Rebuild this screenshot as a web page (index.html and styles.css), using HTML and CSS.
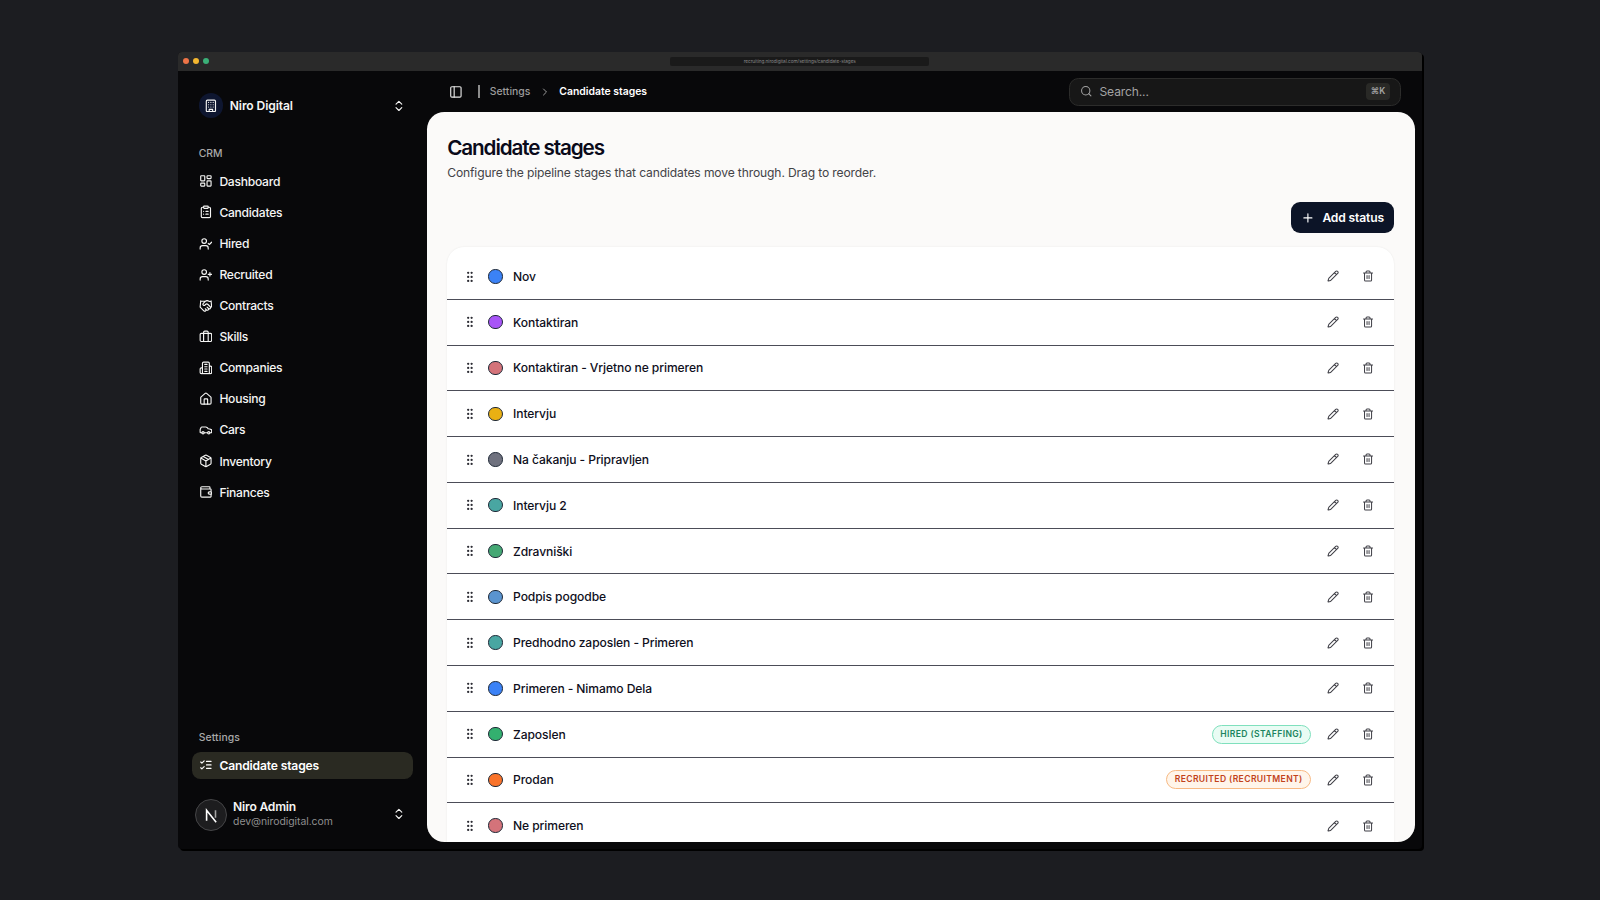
FILE: index.html
```html
<!DOCTYPE html>
<html lang="en">
    <head>
        <meta charset="utf-8">
        <title>Candidate stages</title>
        <link rel="stylesheet" href="styles.css">
    </head>
    <body>
        <svg class="sprite">
            <symbol id="i-building" viewBox="0 0 24 24"><rect x="4" y="2" width="16" height="20" rx="2"/><path d="M9 22v-4h6v4M8 6h.01M16 6h.01M12 6h.01M12 10h.01M12 14h.01M16 10h.01M16 14h.01M8 10h.01M8 14h.01"/></symbol>
            <symbol id="i-updown" viewBox="0 0 24 24"><path d="m7 15 5 5 5-5M7 9l5-5 5 5"/></symbol>
            <symbol id="i-dashboard" viewBox="0 0 24 24"><rect width="7" height="9" x="3" y="3" rx="1"/><rect width="7" height="5" x="14" y="3" rx="1"/><rect width="7" height="9" x="14" y="12" rx="1"/><rect width="7" height="5" x="3" y="16" rx="1"/></symbol>
            <symbol id="i-clipboard" viewBox="0 0 24 24"><rect width="8" height="4" x="8" y="2" rx="1"/><path d="M16 4h2a2 2 0 0 1 2 2v14a2 2 0 0 1-2 2H6a2 2 0 0 1-2-2V6a2 2 0 0 1 2-2h2M12 11h4M12 16h4M8 11h.01M8 16h.01"/></symbol>
            <symbol id="i-usercheck" viewBox="0 0 24 24"><path d="m16 11 2 2 4-4M16 21v-2a4 4 0 0 0-4-4H6a4 4 0 0 0-4 4v2"/><circle cx="9" cy="7" r="4"/></symbol>
            <symbol id="i-userplus" viewBox="0 0 24 24"><path d="M16 21v-2a4 4 0 0 0-4-4H6a4 4 0 0 0-4 4v2M19 8v6M22 11h-6"/><circle cx="9" cy="7" r="4"/></symbol>
            <symbol id="i-handshake" viewBox="0 0 24 24"><path d="m11 17 2 2a1 1 0 1 0 3-3M14 14l2.500 2.500a1 1 0 1 0 3-3l-3.880-3.880a3 3 0 0 0-4.240 0l-.880.880a1 1 0 1 1-3-3l2.810-2.810a5.790 5.790 0 0 1 7.060-.870l.470.280a2 2 0 0 0 1.420.250L21 4M21 3l1 11h-2M3 3 2 14l6.500 6.500a1 1 0 1 0 3-3M3 4h8"/></symbol>
            <symbol id="i-case" viewBox="0 0 24 24"><path d="M16 20V4a2 2 0 0 0-2-2h-4a2 2 0 0 0-2 2v16"/><rect width="20" height="14" x="2" y="6" rx="2"/></symbol>
            <symbol id="i-companies" viewBox="0 0 24 24"><path d="M6 22V4a2 2 0 0 1 2-2h8a2 2 0 0 1 2 2v18ZM6 12H4a2 2 0 0 0-2 2v6a2 2 0 0 0 2 2h2M18 9h2a2 2 0 0 1 2 2v9a2 2 0 0 1-2 2h-2M10 6h4M10 10h4M10 14h4M10 18h4"/></symbol>
            <symbol id="i-house" viewBox="0 0 24 24"><path d="M15 21v-8a1 1 0 0 0-1-1h-4a1 1 0 0 0-1 1v8"/><path d="M3 10a2 2 0 0 1 .709-1.528l7-5.999a2 2 0 0 1 2.582 0l7 5.999A2 2 0 0 1 21 10v9a2 2 0 0 1-2 2H5a2 2 0 0 1-2-2z"/></symbol>
            <symbol id="i-car" viewBox="0 0 24 24"><path d="M19 17h2c.6 0 1-.4 1-1v-3c0-.9-.7-1.700-1.500-1.900C18.700 10.600 16 10 16 10s-1.300-1.400-2.200-2.300c-.5-.4-1.100-.7-1.800-.7H5c-.6 0-1.100.4-1.400.9l-1.400 2.900A3.700 3.700 0 0 0 2 12v4c0 .6.4 1 1 1h2M9 17h6"/><circle cx="7" cy="17" r="2"/><circle cx="17" cy="17" r="2"/></symbol>
            <symbol id="i-package" viewBox="0 0 24 24"><path d="M11 21.730a2 2 0 0 0 2 0l7-4A2 2 0 0 0 21 16V8a2 2 0 0 0-1-1.730l-7-4a2 2 0 0 0-2 0l-7 4A2 2 0 0 0 3 8v8a2 2 0 0 0 1 1.730zM12 22V12M3.290 7 12 12l8.710-5M7.500 4.270l9 5.150"/></symbol>
            <symbol id="i-wallet" viewBox="0 0 24 24"><path d="M19 7V4a1 1 0 0 0-1-1H5a2 2 0 0 0 0 4h15a1 1 0 0 1 1 1v4h-3a2 2 0 0 0 0 4h3a1 1 0 0 0 1-1v-2a1 1 0 0 0-1-1M3 5v14a2 2 0 0 0 2 2h15a1 1 0 0 0 1-1v-4"/></symbol>
            <symbol id="i-checks" viewBox="0 0 24 24"><path d="m3 17 2 2 4-4M3 7l2 2 4-4M13 6h8M13 12h8M13 18h8"/></symbol>
            <symbol id="i-panel" viewBox="0 0 24 24"><rect width="18" height="18" x="3" y="3" rx="2"/><path d="M9 3v18"/></symbol>
            <symbol id="i-chevron" viewBox="0 0 24 24"><path d="m9 18 6-6-6-6"/></symbol>
            <symbol id="i-search" viewBox="0 0 24 24"><circle cx="11" cy="11" r="8"/><path d="m21 21-4.300-4.300"/></symbol>
            <symbol id="i-plus" viewBox="0 0 24 24"><path d="M5 12h14M12 5v14"/></symbol>
            <symbol id="i-grip" viewBox="0 0 24 24"><circle cx="9" cy="12" r="1"/><circle cx="9" cy="5" r="1"/><circle cx="9" cy="19" r="1"/><circle cx="15" cy="12" r="1"/><circle cx="15" cy="5" r="1"/><circle cx="15" cy="19" r="1"/></symbol>
            <symbol id="i-pencil" viewBox="0 0 24 24"><path d="M21.174 6.812a1 1 0 0 0-3.986-3.987L3.842 16.174a2 2 0 0 0-.5.830l-1.321 4.352a.5.5 0 0 0 .623.622l4.353-1.320a2 2 0 0 0 .830-.497zM15 5l4 4"/></symbol>
            <symbol id="i-trash" viewBox="0 0 24 24"><path d="M3 6h18M19 6v14a2 2 0 0 1-2 2H7a2 2 0 0 1-2-2V6M8 6V4a2 2 0 0 1 2-2h4a2 2 0 0 1 2 2v2M10 11v6M14 11v6"/></symbol>
        </svg>

        <div class="window">
            <div class="titlebar">
                <div class="lights"><i class="red"></i><i class="yellow"></i><i class="green"></i></div>
                <div class="address">recruiting.nirodigital.com/settings/candidate-stages</div>
            </div>
            <div class="app">
                <aside class="sidebar">
                    <div class="org">
                        <span class="org-logo"><svg class="icon"><use href="#i-building"/></svg></span>
                        <span class="org-name">Niro Digital</span>
                        <svg class="icon"><use href="#i-updown"/></svg>
                    </div>
                    <p class="group">CRM</p>
                    <nav id="crm">
                        <a class="item"><svg class="icon"><use href="#i-dashboard"/></svg>Dashboard</a>
                        <a class="item"><svg class="icon"><use href="#i-clipboard"/></svg>Candidates</a>
                        <a class="item"><svg class="icon"><use href="#i-usercheck"/></svg>Hired</a>
                        <a class="item"><svg class="icon"><use href="#i-userplus"/></svg>Recruited</a>
                        <a class="item"><svg class="icon"><use href="#i-handshake"/></svg>Contracts</a>
                        <a class="item"><svg class="icon"><use href="#i-case"/></svg>Skills</a>
                        <a class="item"><svg class="icon"><use href="#i-companies"/></svg>Companies</a>
                        <a class="item"><svg class="icon"><use href="#i-house"/></svg>Housing</a>
                        <a class="item"><svg class="icon"><use href="#i-car"/></svg>Cars</a>
                        <a class="item"><svg class="icon"><use href="#i-package"/></svg>Inventory</a>
                        <a class="item"><svg class="icon"><use href="#i-wallet"/></svg>Finances</a>
                    </nav>
                    <p class="group settings">Settings</p>
                    <nav>
                        <a class="item active"><svg class="icon"><use href="#i-checks"/></svg>Candidate stages</a>
                    </nav>
                    <div class="user">
                        <span class="avatar">
                            <svg viewBox="0 0 32 32"><path d="M11.300 22V11l10.200 12.800" class="n-left"/><path d="M20.800 11v8" class="n-right"/></svg>
                        </span>
                        <div class="who">
                            <div class="user-name">Niro Admin</div>
                            <div class="user-mail">dev@nirodigital.com</div>
                        </div>
                        <svg class="icon"><use href="#i-updown"/></svg>
                    </div>
                </aside>

                <main class="main">
                    <header class="topbar">
                        <svg class="icon"><use href="#i-panel"/></svg>
                        <span class="sep"></span>
                        <span class="crumb">Settings</span>
                        <svg class="icon chev"><use href="#i-chevron"/></svg>
                        <span class="crumb current">Candidate stages</span>
                        <div class="search">
                            <svg class="icon"><use href="#i-search"/></svg>
                            <span>Search...</span>
                            <kbd>⌘K</kbd>
                        </div>
                    </header>
                    <section class="panel">
                        <h1>Candidate stages</h1>
                        <p class="desc">Configure the pipeline stages that candidates move through. Drag to reorder.</p>
                        <button type="button" class="add"><svg class="icon"><use href="#i-plus"/></svg>Add status</button>
                        <div class="card" id="stages"></div>
                    </section>
                </main>
            </div>
        </div>

        <script>
            let stages = [
                { name: 'Nov', color: '#3b82f6' },
                { name: 'Kontaktiran', color: '#a855f7' },
                { name: 'Kontaktiran - Vrjetno ne primeren', color: '#d4737a' },
                { name: 'Intervju', color: '#eab013' },
                { name: 'Na čakanju - Pripravljen', color: '#6f717e' },
                { name: 'Intervju 2', color: '#49a6a2' },
                { name: 'Zdravniški', color: '#45a874' },
                { name: 'Podpis pogodbe', color: '#5a94cf' },
                { name: 'Predhodno zaposlen - Primeren', color: '#49a6a2' },
                { name: 'Primeren - Nimamo Dela', color: '#3b82f6' },
                { name: 'Zaposlen', color: '#33b06f', badge: 'Hired (Staffing)', type: 'hired' },
                { name: 'Prodan', color: '#f9732a', badge: 'Recruited (Recruitment)', type: 'recruited' },
                { name: 'Ne primeren', color: '#d4737a' }
            ];

            let list = document.getElementById('stages');
            stages.forEach(stage => {
                let badge = stage.badge ? `<span class="badge ${stage.type}">${stage.badge}</span>` : '';
                list.innerHTML += `
                    <div class="row">
                        <svg class="icon grip"><use href="#i-grip"/></svg>
                        <span class="swatch" style="background:${stage.color}"></span>
                        <span class="stage-name">${stage.name}</span>
                        ${badge}
                        <svg class="icon act"><use href="#i-pencil"/></svg>
                        <svg class="icon act"><use href="#i-trash"/></svg>
                    </div>`;
            })
        </script>
    </body>
</html>
```
FILE: styles.css
```css
*{
    box-sizing: border-box;
}
body{
    margin: 0;
    height: 900px;
    overflow: hidden;
    background-color: #1c1d21;
    font-family: Inter, "Noto Sans", sans-serif;
    font-size: 12.1px;
    padding: 52px 0 0 178px;
}
p, h1{
    margin: 0;
}
.sprite{
    display: none;
}
.icon{
    width: 13.8px;
    height: 13.8px;
    fill: none;
    stroke: currentColor;
    stroke-width: 2;
    stroke-linecap: round;
    stroke-linejoin: round;
    flex-shrink: 0;
}
.window{
    width: 1243.5px;
    height: 796.5px;
    border-radius: 4px;
    background-color: #08080a;
    box-shadow: 2px 2px 0 #000;
    overflow: hidden;
}
.titlebar{
    height: 19px;
    background-color: #2a2a2a;
    display: grid;
    grid-template-columns: 1fr 259px 1fr;
    align-items: center;
}
.lights{
    display: flex;
    gap: 4px;
    padding-left: 5.3px;
    margin-top: -1px;
}
.lights i{
    width: 6px;
    height: 6px;
    border-radius: 50%;
}
.red{
    background-color: #ee7447;
}
.yellow{
    background-color: #f4b730;
}
.green{
    background-color: #3bb078;
}
.address{
    height: 9px;
    line-height: 9px;
    margin-top: -1px;
    border-radius: 2px;
    background-color: #1a1a1a;
    color: #8a8a8a;
    font-size: 4.7px;
    letter-spacing: -0.05px;
    text-align: center;
}
.app{
    display: flex;
    height: 777.5px;
}

/* sidebar */
.sidebar{
    width: 248.5px;
    padding: 17.5px 13.8px 14px;
    display: flex;
    flex-direction: column;
    color: #f5f5f4;
}
.org{
    display: flex;
    align-items: center;
    height: 34px;
    padding: 0 6.9px;
}
.org-logo{
    width: 24.2px;
    height: 24.2px;
    border-radius: 50%;
    background-color: #0e1630;
    display: flex;
    align-items: center;
    justify-content: center;
}
.org-name{
    flex: 1;
    margin-left: 6.9px;
    font-weight: 600;
    letter-spacing: -0.1px;
}
.group{
    margin-top: 17.3px;
    height: 27.6px;
    line-height: 27.6px;
    padding-left: 6.9px;
    font-size: 10.4px;
    font-weight: 500;
    color: #a9a9a9;
}
.group.settings{
    margin-top: auto;
    letter-spacing: 0.1px;
}
nav{
    display: flex;
    flex-direction: column;
    gap: 3.46px;
}
.item{
    display: flex;
    align-items: center;
    gap: 6.9px;
    height: 27.65px;
    padding-left: 6.9px;
    border-radius: 8.6px;
    font-weight: 500;
    letter-spacing: -0.26px;
}
.item.active{
    background-color: #2a2a22;
    font-weight: 600;
    letter-spacing: -0.15px;
    color: #fff;
}
.user{
    display: flex;
    align-items: center;
    margin-top: 13.8px;
    height: 41.5px;
    padding: 0 6.9px 0 3px;
}
.avatar{
    width: 32px;
    height: 32px;
    margin-top: 2px;
    border-radius: 50%;
    background-color: #1d1d1f;
    border: 1px solid #454547;
}
.avatar svg{
    display: block;
    width: 30px;
    height: 30px;
    fill: none;
    stroke: #fff;
    stroke-width: 1.7;
}
.avatar .n-right{
    stroke: #a5a5a5;
}
.who{
    flex: 1;
    margin-left: 6.3px;
}
.user-name{
    font-weight: 600;
    line-height: 15px;
    letter-spacing: -0.2px;
}
.user-mail{
    font-size: 10.4px;
    line-height: 15px;
    letter-spacing: -0.05px;
    color: #8f8f8f;
}

/* main area */
.main{
    width: 988.5px;
    height: 770.5px;
    display: flex;
    flex-direction: column;
}
.topbar{
    height: 41px;
    flex-shrink: 0;
    display: flex;
    align-items: center;
    padding: 0 14px 0 22.5px;
    color: #e7e7e7;
}
.sep{
    width: 1.5px;
    height: 13.8px;
    margin: 0 10px 0 15.5px;
    background-color: #8c8c8c;
}
.crumb{
    font-size: 10.4px;
    font-weight: 500;
    color: #9c9c9c;
}
.chev{
    width: 12px;
    height: 12px;
    margin: 0 8.5px;
    color: #9c9c9c;
}
.crumb.current{
    font-weight: 600;
    color: #fff;
}
.search{
    margin-left: auto;
    width: 332px;
    height: 28px;
    border: 1px solid #2c2c2b;
    border-radius: 9.5px;
    background-color: #171717;
    display: flex;
    align-items: center;
    padding: 0 10px;
    color: #a3a3a3;
}
.search .icon{
    width: 12.5px;
    height: 12.5px;
}
.search span{
    flex: 1;
    margin-left: 7px;
    letter-spacing: -0.15px;
}
kbd{
    width: 24px;
    height: 17px;
    line-height: 17px;
    border-radius: 4px;
    background-color: #292926;
    text-align: center;
    font-family: Inter, "DejaVu Sans", sans-serif;
    font-size: 8.6px;
    font-weight: 600;
    color: #a3a3a3;
}
.panel{
    flex: 1;
    overflow: hidden;
    border-radius: 17.3px;
    background-color: #fbfaf9;
    padding: 22px 20.7px 0;
    display: flex;
    flex-direction: column;
}
h1{
    font-size: 20.7px;
    line-height: 27px;
    font-weight: 600;
    letter-spacing: -1.12px;
    color: #0a0a1a;
}
.desc{
    line-height: 17px;
    margin-top: 3px;
    letter-spacing: -0.13px;
    color: #434347;
}
.add{
    align-self: flex-end;
    flex-shrink: 0;
    width: 103px;
    height: 31px;
    margin: 21px 0 14.4px;
    padding: 0 0 0 10px;
    display: flex;
    align-items: center;
    gap: 7.3px;
    border: none;
    border-radius: 9px;
    background-color: #0c1427;
    color: #fff;
    font-family: inherit;
    font-size: 12.1px;
    font-weight: 600;
    letter-spacing: -0.15px;
}
.card{
    flex-shrink: 0;
    padding-top: 6.7px;
    border-radius: 17.3px 17.3px 0 0;
    background-color: #fff;
    box-shadow: 0 0 2px rgba(0, 0, 0, 0.08);
}
.row{
    height: 45.78px;
    display: flex;
    align-items: center;
    padding: 0 20.5px 0 15.5px;
    border-bottom: 1px solid #4c4d58;
    color: #0f0f1c;
}
.grip{
    color: #2c2c34;
}
.swatch{
    width: 14.4px;
    height: 14.4px;
    margin: 0 10.2px 0 12px;
    border-radius: 50%;
    border: 1px solid #1f2937;
}
.stage-name{
    flex: 1;
    font-weight: 500;
    letter-spacing: -0.1px;
}
.act{
    width: 12.1px;
    height: 12.1px;
    margin-left: 22.5px;
    color: #3f3f46;
}
.badge + .act{
    margin-left: 16.2px;
}
.badge{
    height: 19px;
    line-height: 17px;
    padding: 0 7.3px;
    border-radius: 10px;
    border: 1px solid;
    font-size: 8.6px;
    font-weight: 600;
    letter-spacing: 0.36px;
    text-transform: uppercase;
}
.hired{
    color: #1c8560;
    border-color: #7fe0bd;
    background-color: #e9fcf4;
}
.recruited{
    color: #c2421a;
    border-color: #f7b983;
    background-color: #fff5ea;
}
```
